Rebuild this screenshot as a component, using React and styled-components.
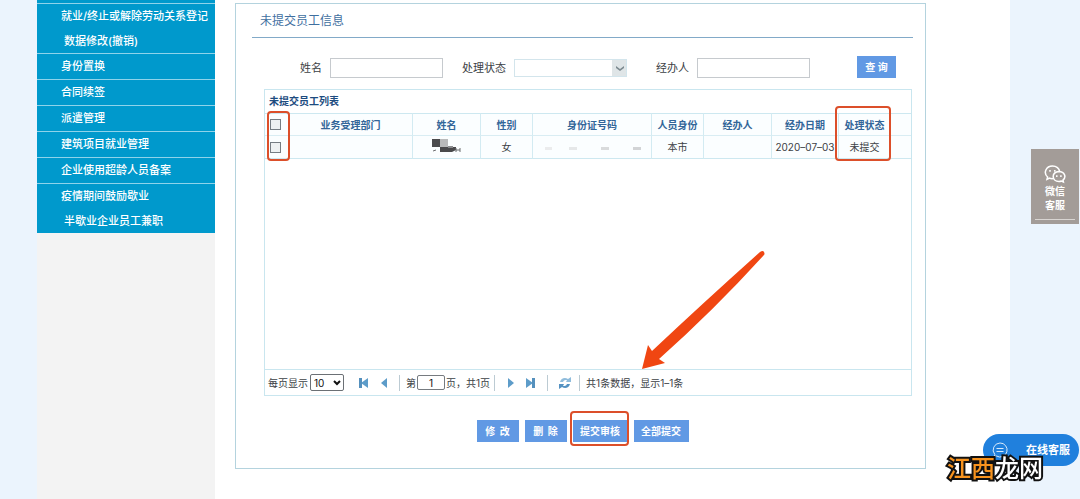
import React from 'react';
import styled, { createGlobalStyle, css } from 'styled-components';

const Global = createGlobalStyle`
  * { box-sizing: border-box; }
  body {
    margin: 0;
    background: #ebf4fd;
    color: #3c4145;
    font-family: Inter, "Noto Sans CJK SC", sans-serif;
    font-size: 10px;
    line-height: 14px;
  }
  button, input, select { font: inherit; color: inherit; margin: 0; }
`;

const Page = styled.div`
  display: flex;
  min-height: 100vh;
  margin: 0 70px 0 37px;
  background: #fff;
`;

const Sidebar = styled.nav`
  flex: 0 0 178px;
  background: #f3f3f3;
`;

const MenuTop = styled.div`
  height: 3px;
  background: #0099cc;
`;

const Menu = styled.ul`
  margin: 0;
  padding: 0;
  list-style: none;
  background: #0099cc;
`;

const MenuItem = styled.li`
  height: ${(p) => (p.$double ? '50px' : '26px')};
  border-top: 1px solid #8fd3ea;
  overflow: hidden;
`;

const MenuLink = styled.a`
  display: block;
  padding-left: 24px;
  color: #fff;
  font-size: 11px;
  font-weight: 500;
  line-height: 25px;
  text-decoration: none;
  white-space: nowrap;
`;

const SecondLine = styled.span`
  display: block;
  padding-left: 3px;
`;

const Main = styled.main`
  flex: 1;
  min-width: 0;
  padding: 3px 84px 30px 20px;
`;

const Panel = styled.section`
  padding: 0 12px 26px 16px;
  border: 1px solid #b4d3de;
`;

const Title = styled.h1`
  margin: 0;
  padding: 0 8px;
  border-bottom: 1px solid #82aac8;
  color: #3f6f9f;
  font-size: 12px;
  font-weight: 400;
  line-height: 33px;
`;

const Search = styled.form`
  display: grid;
  grid-template-columns: 162px 194px 1fr auto;
  align-items: end;
  padding: 18px 17px 11px 48px;
`;

const Field = styled.div`
  display: flex;
  align-items: center;
  gap: 8px;
  height: 20px;
  font-size: 11px;
`;

const control = css`
  width: 113px;
  height: 20px;
  padding: 0 4px;
  border-radius: 0;
  outline: none;
`;

const TextInput = styled.input`
  ${control}
  border: 1px solid #c6cace;
  background: #fff;
`;

const SelectWrap = styled.div`
  position: relative;
  display: flex;
`;

const StateSelect = styled.select`
  ${control}
  height: 18px;
  appearance: none;
  border: 1px solid #d3e5ec;
  background: linear-gradient(#dfe5e7, #dfe5e7) right / 14px 100% no-repeat #fff;
`;

const Chevron = styled.svg`
  position: absolute;
  right: 3px;
  top: 6px;
  pointer-events: none;
`;

const Button = styled.button`
  width: ${(p) => p.$width || 42}px;
  height: 22px;
  padding: 0;
  border: 0;
  background: #6199e4;
  color: #fff;
  font-weight: 700;
  white-space: pre;
`;

const Grid = styled.div`
  display: flex;
  flex-direction: column;
  margin: 0 1px 0 12px;
  border: 1px solid #c9e6ef;
`;

const GridTitle = styled.h2`
  margin: 0;
  padding: 0 4px;
  color: #1d4c80;
  font-size: 10px;
  font-weight: 700;
  line-height: 23px;
`;

const Table = styled.table`
  width: 100%;
  table-layout: fixed;
  border-collapse: separate;
  border-spacing: 0;
  background: #fbfeff;
`;

const cell = css`
  position: relative;
  height: 23px;
  padding: 0;
  border-right: ${(p) => (p.$bare ? '0' : '1px solid #d3ebf2')};
  text-align: center;
  white-space: nowrap;
`;

const Th = styled.th`
  ${cell}
  border-top: 1px solid #cde8f0;
  border-bottom: 1px solid #d9edf3;
  color: #336699;
  font-weight: 700;
`;

const Td = styled.td`
  ${cell}
  border-bottom: 1px solid #cde8f0;
`;

const Check = styled.input`
  display: block;
  appearance: none;
  width: 11px;
  height: 11px;
  margin: 0 5px;
  border: 1px solid #767d83;
  background: #eef1f2;
`;

const Body = styled.div`
  position: relative;
  height: 210px;
`;

const Arrow = styled.svg`
  position: absolute;
  left: 376px;
  bottom: 0;
`;

const Mark = styled.span`
  position: absolute;
  inset: ${(p) => p.$inset};
  z-index: 1;
  border: 2px solid #dc4f2a;
  border-radius: 4px;
  pointer-events: none;
`;

const Pager = styled.div`
  display: flex;
  align-items: center;
  height: 26px;
  padding-left: 3px;
  border-top: 1px solid #c9e6ef;
`;

const PageSize = styled.select`
  width: 34px;
  height: 17px;
  padding: 0 3px;
  appearance: none;
  border: 1px solid #6b7075;
  border-radius: 2px;
  background: #fff;
  color: #111;
`;

const PageInput = styled.input`
  width: 28px;
  height: 15px;
  margin: 0 1px;
  padding: 0;
  border: 1px solid #767b80;
  border-radius: 2px;
  color: #111;
  text-align: center;
`;

const IconButton = styled.button`
  display: flex;
  justify-content: center;
  width: 20px;
  padding: 0;
  border: 0;
  background: none;
`;

const PagerGroup = styled.div`
  display: flex;
  align-items: center;
  margin: ${(p) => p.$margin};
`;

const Divider = styled.span`
  width: 1px;
  height: 16px;
  margin-right: ${(p) => p.$after || 0}px;
  background: #bccbd3;
`;

const Actions = styled.div`
  display: flex;
  justify-content: center;
  gap: 6px;
  padding-top: 24px;
`;

const MarkWrap = styled.div`
  position: relative;
  display: flex;
`;

const WechatBox = styled.a`
  position: fixed;
  top: 149px;
  right: 1px;
  display: flex;
  flex-direction: column;
  align-items: center;
  width: 48px;
  height: 75px;
  padding: 16px 4px 4px;
  background: #a39c98;
  color: #fff;
  font-weight: 700;
  text-align: center;
  text-decoration: none;

  &::after {
    content: '';
    width: 100%;
    height: 1px;
    margin-top: auto;
    background: #d9d5d2;
  }
`;

const WechatText = styled.span`
  width: 20px;
`;

const Chat = styled.button`
  position: fixed;
  right: 1px;
  bottom: 33px;
  display: flex;
  align-items: center;
  justify-content: space-between;
  width: 96px;
  height: 32px;
  padding: 0 9px;
  border: 0;
  border-radius: 16px;
  background: #2080dd;
  color: #fff;
  font-size: 11px;
  font-weight: 700;
  line-height: 12px;
`;

const Watermark = styled.div`
  position: fixed;
  right: 37px;
  bottom: 18px;
  z-index: 2;
  color: #fff;
  font-size: 24px;
  font-weight: 500;
  line-height: 24px;
  -webkit-text-stroke: 4px #111;
  paint-order: stroke fill;
`;

const Accent = styled.span`
  color: #f7931e;
`;

const menu = [
  ['就业/终止或解除劳动关系登记', '数据修改(撤销)'],
  ['身份置换'],
  ['合同续签'],
  ['派遣管理'],
  ['建筑项目就业管理'],
  ['企业使用超龄人员备案'],
  ['疫情期间鼓励歇业', '半歇业企业员工兼职'],
];

const columns = [24, 124, 68, 52, 119, 52, 68, 67, 52];

const MaskedName = () => (
  <svg width="30" height="16" viewBox="0 0 30 16" role="img" aria-label="已遮盖">
    <path d="M0 1h8v8H0z" fill="#4b4b4d" />
    <path d="M8 1h8v8H8z" fill="#b9babb" />
    <path d="M8 9h16v3l-4 2H8z" fill="#4a4a4c" />
    <path d="M16 8h5v2h-5z" fill="#8b8c8e" />
    <path d="M1 13l3-1M24 14v-4M24 12h4M28 14v-4" stroke="#6d6e70" fill="none" />
  </svg>
);

const MaskedId = () => (
  <svg width="98" height="10" viewBox="0 0 98 10" role="img" aria-label="已遮盖">
    <path d="M2 6h7v3H2z" fill="#ebeced" />
    <path d="M26 6h8v3h-8z" fill="#e6e8e9" />
    <path d="M58 6h8v3h-8z" fill="#d9dbdc" />
    <path d="M90 6h8v3h-8z" fill="#d2d4d6" />
  </svg>
);

const PagerButton = ({ d, bar, label }) => (
  <IconButton type="button" aria-label={label}>
    <svg width="12" height="12" viewBox="0 0 12 12">
      <path d={d} fill="#5d9cc9" />
      {bar && <path d={bar} fill="#5590bd" />}
    </svg>
  </IconButton>
);

export default function App() {
  return (
    <>
      <Global />
      <Page>
        <Sidebar>
          <MenuTop />
          <Menu>
            {menu.map(([first, second]) => (
              <MenuItem key={first} $double={!!second}>
                <MenuLink href="#">
                  {first}
                  {second && <SecondLine>{second}</SecondLine>}
                </MenuLink>
              </MenuItem>
            ))}
          </Menu>
        </Sidebar>
        <Main>
          <Panel>
            <Title>未提交员工信息</Title>
            <Search onSubmit={(e) => e.preventDefault()}>
              <Field>
                <label htmlFor="name">姓名</label>
                <TextInput id="name" />
              </Field>
              <Field>
                <label htmlFor="state">处理状态</label>
                <SelectWrap>
                  <StateSelect id="state" defaultValue="">
                    <option value="" aria-label="全部" />
                  </StateSelect>
                  <Chevron width="8" height="7" viewBox="0 0 8 7">
                    <path d="M0 1l4 3 4-3v2L4 6 0 3z" fill="#7d8a90" />
                  </Chevron>
                </SelectWrap>
              </Field>
              <Field>
                <label htmlFor="agent">经办人</label>
                <TextInput id="agent" />
              </Field>
              <Button $width={39}>查 询</Button>
            </Search>
            <Grid>
              <GridTitle>未提交员工列表</GridTitle>
              <Table>
                <colgroup>
                  {columns.map((w, i) => (
                    <col key={i} width={w} />
                  ))}
                  <col />
                </colgroup>
                <thead>
                  <tr>
                    <Th>
                      <Check type="checkbox" aria-label="全选" />
                      <Mark $inset="-3px -2px -26px 2px" />
                    </Th>
                    <Th>业务受理部门</Th>
                    <Th>姓名</Th>
                    <Th>性别</Th>
                    <Th>身份证号码</Th>
                    <Th>人员身份</Th>
                    <Th>经办人</Th>
                    <Th>经办日期</Th>
                    <Th>
                      处理状态
                      <Mark $inset="-8px -1px -26px -4px" />
                    </Th>
                    <Th $bare />
                  </tr>
                </thead>
                <tbody>
                  <tr>
                    <Td><Check type="checkbox" aria-label="选择" /></Td>
                    <Td />
                    <Td><MaskedName /></Td>
                    <Td>女</Td>
                    <Td><MaskedId /></Td>
                    <Td>本市</Td>
                    <Td />
                    <Td>2020–07–03</Td>
                    <Td>未提交</Td>
                    <Td $bare />
                  </tr>
                </tbody>
              </Table>
              <Body>
                <Arrow width="126" height="120" viewBox="0 0 126 120" aria-hidden="true">
                  <path
                    d="M1 120L7 96l4 6Q62 54 119 3q3-2 4 0t0 3Q72 62 18 110l6 4z"
                    fill="#f04612"
                  />
                </Arrow>
              </Body>
              <Pager>
                <label htmlFor="size">每页显示</label>
                <PagerGroup $margin="0 0 0 2px">
                  <SelectWrap>
                    <PageSize id="size" defaultValue="10">
                      <option>10</option>
                    </PageSize>
                    <Chevron width="8" height="7" viewBox="0 0 8 7">
                      <path d="M1 1l3 3 3-3" stroke="#111" strokeWidth="2" fill="none" />
                    </Chevron>
                  </SelectWrap>
                </PagerGroup>
                <PagerGroup $margin="0 5px 0 10px">
                  <PagerButton label="首页" bar="M1 1h3v10H1z" d="M10 1v10L3 6z" />
                  <PagerButton label="上一页" d="M9 1v10L3 6z" />
                </PagerGroup>
                <Divider $after={6} />
                <label htmlFor="page">第</label>
                <PageInput id="page" defaultValue="1" />
                <span>页，共1页</span>
                <PagerGroup $margin="0 6px 0 4px">
                  <Divider $after={6} />
                  <PagerButton label="下一页" d="M3 1v10l6-5z" />
                  <PagerButton label="末页" bar="M7 1h3v10H7z" d="M1 1v10l7-5z" />
                </PagerGroup>
                <Divider $after={7} />
                <IconButton type="button" aria-label="刷新">
                  <svg width="14" height="12" viewBox="0 0 14 12">
                    <path d="M2 5c1-4 5-5 8-3l3-2v5H8l1-2C7 3 6 3 5 5z" fill="#8fbcdc" />
                    <path d="M12 7c-1 4-5 5-8 3l-3 2V7h5L5 9c2 0 3 0 4-2z" fill="#5592c2" />
                  </svg>
                </IconButton>
                <PagerGroup $margin="0 0 0 4px">
                  <Divider $after={6} />
                  <span>共1条数据，显示1–1条</span>
                </PagerGroup>
              </Pager>
            </Grid>
            <Actions>
              <Button>修  改</Button>
              <Button>删  除</Button>
              <MarkWrap>
                <Button $width={55}>提交审核</Button>
                <Mark $inset="-9px -1px -4px -3px" />
              </MarkWrap>
              <Button $width={55}>全部提交</Button>
            </Actions>
          </Panel>
        </Main>
      </Page>
      <WechatBox href="#">
        <svg width="22" height="19" viewBox="0 0 22 19" fill="none" stroke="#fff" strokeWidth="1.5">
          <path d="M9 13.6q-2 .2-3.500-.5L3 14.400l.6-2.400C-1 8 2 1 8.500 1c4 0 6.800 2.500 7.100 5.300" />
          <path d="M15 6.500c-8 .2-7.500 10 0 10q1.200 0 2.400-.5l2 1-.4-1.900C22.700 12 20.500 6.500 15 6.500z" />
          <path d="M6 5v1.800M10.800 5v1.800M12.800 10.300v1.600M16.900 10.300v1.600" />
        </svg>
        <WechatText>微信客服</WechatText>
      </WechatBox>
      <Chat type="button">
        <svg width="16" height="16" viewBox="0 0 16 16" fill="none" stroke="#d8eafb">
          <path d="M8 1a7 7 0 1 1-3.500 13L2 14.500l.8-2A7 7 0 0 1 8 1z" />
          <path d="M4.500 6.500h7M4.500 9.500h7" />
        </svg>
        在线客服
      </Chat>
      <Watermark><Accent>江西</Accent>龙网</Watermark>
    </>
  );
}
